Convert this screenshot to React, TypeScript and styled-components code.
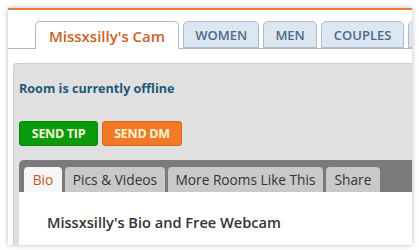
import React from "react";
import styled, { createGlobalStyle } from "styled-components";

const Global = createGlobalStyle`
  html, body { margin: 0; padding: 0; background: #ffffff; }
  body { font-family: "Open Sans", "DejaVu Sans", sans-serif; overflow: hidden; }
`;

const Page = styled.div`
  width: 419px;
  height: 250px;
  padding: 8px 7px 7px 8px;
  box-sizing: border-box;
  overflow: hidden;
`;

const Card = styled.div`
  width: 404px;
  height: 235px;
  background: #ffffff;
  border-top: 2px solid #e67a36;
  box-shadow: 0 0 5px rgba(0, 0, 0, 0.28);
  display: flex;
  flex-direction: column;
  overflow: hidden;
`;

const TopTabs = styled.div`
  display: flex;
  align-items: flex-end;
  gap: 4px;
  height: 38px;
  padding-left: 27px;
  border-bottom: 1px solid #a9bccf;
  flex-shrink: 0;
`;

const TopTab = styled.div<{ $active?: boolean; $w?: number }>`
  display: flex;
  align-items: center;
  justify-content: center;
  flex-shrink: 0;
  box-sizing: border-box;
  width: ${(p) => (p.$w ? `${p.$w}px` : "auto")};
  height: ${(p) => (p.$active ? "28px" : "27px")};
  margin-bottom: ${(p) => (p.$active ? "-1px" : "0")};
  padding: 0 ${(p) => (p.$active ? "13px" : "0")};
  border: 1px solid #a9bccf;
  border-bottom: ${(p) => (p.$active ? "none" : "1px solid #a9bccf")};
  border-radius: 5px 5px 0 0;
  background: ${(p) => (p.$active ? "#ffffff" : "#dce7f2")};
  color: ${(p) => (p.$active ? "#c8621f" : "#4d6a86")};
  font-size: ${(p) => (p.$active ? "15px" : "13px")};
  font-weight: 600;
  white-space: nowrap;
`;

const Body = styled.div`
  flex: 1;
  padding: 14px 0 0 5px;
  display: flex;
  flex-direction: column;
`;

const Panel = styled.div`
  flex: 1;
  background: #e0e0e0;
  border-top: 1px solid #cacaca;
  border-left: 1px solid #cfcfcf;
  border-top-left-radius: 4px;
  padding: 0 0 0 5px;
  display: flex;
  flex-direction: column;
`;

const Status = styled.div`
  margin-top: 16px;
  height: 16px;
  color: #1d5978;
  font-size: 12.6px;
  font-weight: 700;
  letter-spacing: 0;
`;

const Actions = styled.div`
  display: flex;
  gap: 4px;
  margin-top: 25px;
`;

const ActionButton = styled.button<{ $tone: "green" | "orange" }>`
  box-sizing: border-box;
  height: 25px;
  width: ${(p) => (p.$tone === "green" ? "79px" : "80px")};
  padding: 0;
  border-radius: 3px;
  border: 1px solid ${(p) => (p.$tone === "green" ? "#0a7f0a" : "#d8661c")};
  background: ${(p) => (p.$tone === "green" ? "#0a9b0c" : "#f27a26")};
  color: #f6f3d6;
  font-family: "Open Sans", sans-serif;
  font-size: 12.5px;
  font-weight: 700;
  letter-spacing: -0.3px;
`;

const InfoBox = styled.div`
  margin-top: 14px;
  flex: 1;
  display: flex;
  flex-direction: column;
`;

const InfoTabs = styled.div`
  display: flex;
  align-items: flex-end;
  gap: 3px;
  height: 32px;
  padding-left: 5px;
  background: #7b7b7b;
  border-top-left-radius: 5px;
  flex-shrink: 0;
`;

const InfoTab = styled.div<{ $active?: boolean; $w: number }>`
  display: flex;
  align-items: center;
  justify-content: center;
  box-sizing: border-box;
  width: ${(p) => p.$w}px;
  height: 25px;
  border-radius: 4px 4px 0 0;
  background: ${(p) => (p.$active ? "#f7f7f7" : "#c9c9c9")};
  color: ${(p) => (p.$active ? "#c5581b" : "#333333")};
  font-size: 13.7px;
  white-space: nowrap;
  flex-shrink: 0;
`;

const InfoContent = styled.div`
  flex: 1;
  background: #ffffff;
  padding: 20px 0 0 28px;
`;

const InfoTitle = styled.h2`
  margin: 0;
  color: #333333;
  font-size: 14.6px;
  font-weight: 600;
`;

export default function App() {
  return (
    <>
      <Global />
      <Page>
        <Card>
          <TopTabs>
            <TopTab $active>Missxsilly's Cam</TopTab>
            <TopTab $w={76}>WOMEN</TopTab>
            <TopTab $w={54}>MEN</TopTab>
            <TopTab $w={83}>COUPLES</TopTab>
            <TopTab $w={60} aria-label="more" />
          </TopTabs>
          <Body>
            <Panel>
              <Status>Room is currently offline</Status>
              <Actions>
                <ActionButton $tone="green">SEND TIP</ActionButton>
                <ActionButton $tone="orange">SEND DM</ActionButton>
              </Actions>
              <InfoBox>
                <InfoTabs>
                  <InfoTab $active $w={38}>Bio</InfoTab>
                  <InfoTab $w={100}>Pics &amp; Videos</InfoTab>
                  <InfoTab $w={155}>More Rooms Like This</InfoTab>
                  <InfoTab $w={54}>Share</InfoTab>
                </InfoTabs>
                <InfoContent>
                  <InfoTitle>Missxsilly's Bio and Free Webcam</InfoTitle>
                </InfoContent>
              </InfoBox>
            </Panel>
          </Body>
        </Card>
      </Page>
    </>
  );
}
